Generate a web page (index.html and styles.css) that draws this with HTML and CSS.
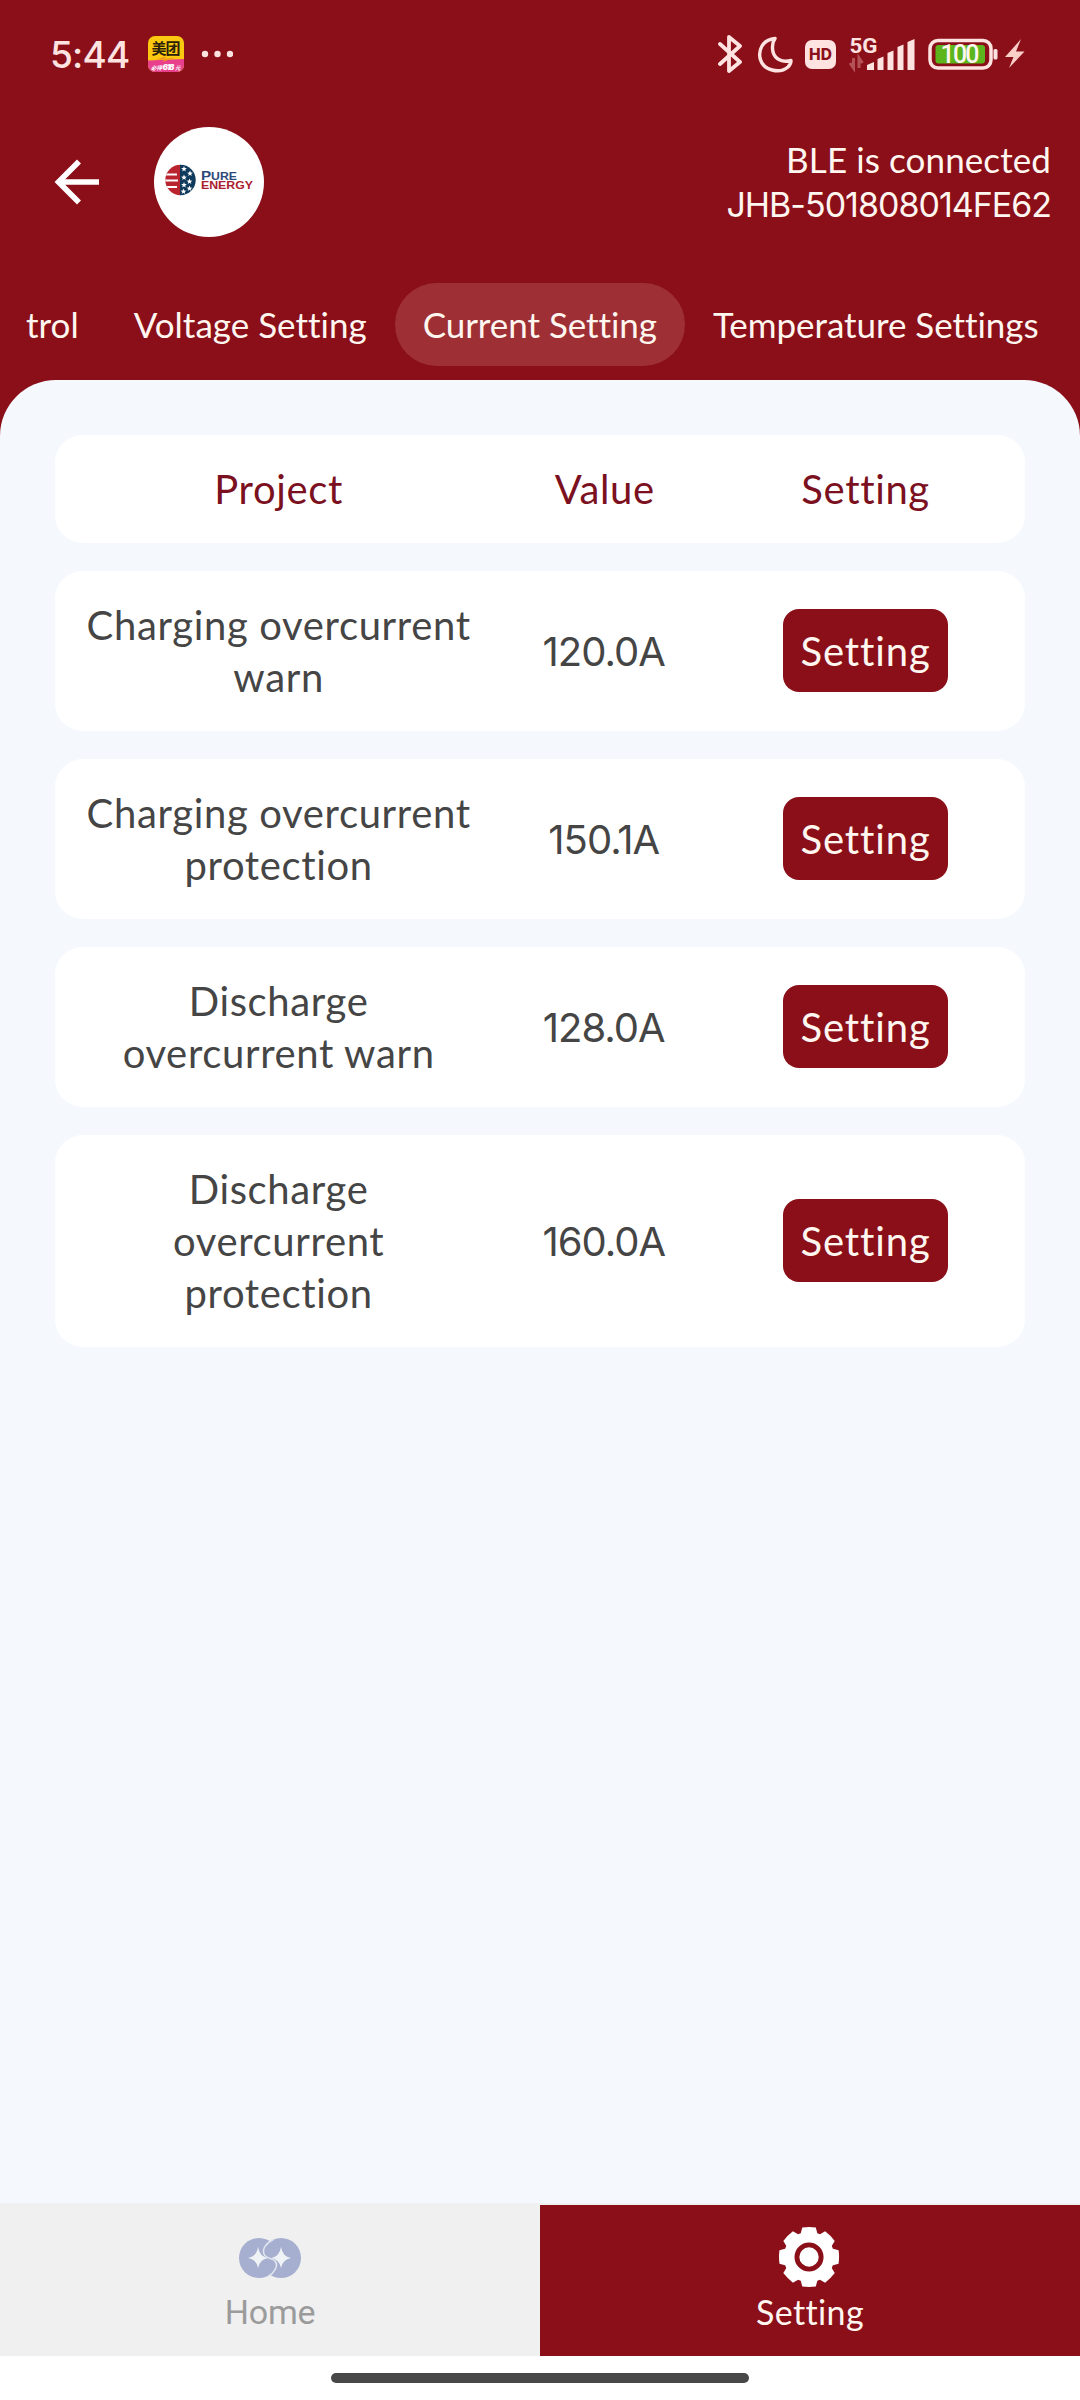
FILE: index.html
```html
<!DOCTYPE html>
<html lang="en">
<head>
<meta charset="utf-8">
<title>Current Setting</title>
<link rel="stylesheet" href="styles.css">
</head>
<body>
<div class="app">
  <div class="status">
    <span class="clock">5:44</span>
    <svg class="promo" width="36" height="36" viewBox="0 0 36 36">
      <clipPath id="tile"><rect width="36" height="36" rx="7"/></clipPath>
      <g clip-path="url(#tile)">
        <rect width="36" height="36" fill="#fdc910"/>
        <path d="M0 24.5 36 23V36H0Z" fill="#e8408c"/>
        <path d="M7 23.5 19 20.5 16 23 28 21.5 14 26 17 23.5Z" fill="#f5911e"/>
        <text class="promo-name" x="3.5" y="17.5" textLength="29">美团</text>
        <text class="promo-sub" x="3" y="34" textLength="11">必得</text>
        <text class="promo-num" x="14.5" y="34" textLength="12">618</text>
        <text class="promo-sub" x="27" y="34">元</text>
      </g>
    </svg>
    <svg class="dots" width="32" height="8" viewBox="0 0 32 8" fill="#ffe3e1"><circle cx="4" cy="4" r="3.2"/><circle cx="16.5" cy="4" r="3.2"/><circle cx="29" cy="4" r="3.2"/></svg>
    <svg class="indicators" width="312" height="40" viewBox="0 0 312 40" fill="none">
      <path d="M4 10 24 28 13 37V3L24 12 4 30" transform="translate(-2 0)" stroke="#ffe3e1" stroke-width="3.8" stroke-linejoin="round" stroke-linecap="round"/>
      <path d="M57 4.5C44 6 40.5 16 42 24 45 37 62 40 70 33 72 31 73 28.5 73 26.5 64 29 57 25 55 18 54 13 54.5 8 57 4.5Z" stroke="#ffe3e1" stroke-width="3.4" stroke-linejoin="round"/>
      <rect x="87" y="6" width="31" height="29" rx="7" fill="#ffe3e1"/>
      <text class="hd" x="91" y="26" textLength="23">HD</text>
      <text class="net" x="131.5" y="19" textLength="28" lengthAdjust="spacingAndGlyphs">5G</text>
      <path d="M132 29 135.5 34V24M144.5 29 141 24V34" stroke="#b35257" stroke-width="3"/>
      <path transform="translate(-1 0)" fill="#ffe3e1" d="M150 31 157 28V36H150ZM160.5 25 166.5 22.5V36H160.5ZM170.5 19 176.5 16.5V36H170.5ZM180.5 13 186.5 10.5V36H180.5ZM190.5 8 197.5 5V36H190.5Z"/>
      <rect x="212" y="6.5" width="61" height="27.5" rx="8" stroke="#ffe3e1" stroke-width="3.5"/>
      <rect x="217.5" y="11" width="49.5" height="18.5" rx="3" fill="#5cb51c"/>
      <rect x="275.5" y="15" width="4" height="10.5" rx="1.5" fill="#ffe3e1"/>
      <text class="level" x="222.5" y="29" textLength="39">100</text>
      <path d="M303 5 287 23H295.5L291 34 306.5 17.5H298Z" fill="#f9cfc8"/>
    </svg>
  </div>

  <header class="header">
    <svg class="back" width="46" height="46" viewBox="0 0 46 46" fill="none" stroke="#fff" stroke-width="5.6"><path d="M25 2.5 4.5 23 25 43.5M4.5 23H45"/></svg>
    <svg class="logo" width="110" height="110" viewBox="0 0 110 110">
      <circle cx="55" cy="55" r="55" fill="#fff"/>
      <clipPath id="ball"><circle cx="26.5" cy="53" r="15.2"/></clipPath>
      <g clip-path="url(#ball)">
        <rect x="11" y="37" width="15" height="32" fill="#b9242f"/>
        <rect x="26" y="37" width="17" height="32" fill="#0f3a5c"/>
        <path d="M11 47.5H23M11 53.5H24M11 60H23" stroke="#fff" stroke-width="1.8"/>
      </g>
      <defs><path id="star" d="M0-2.9.8-.9 2.9-.8 1.2.5 1.8 2.5 0 1.3-1.8 2.5-1.2.5-2.9-.8-.8-.9Z" fill="#fff"/></defs>
      <use href="#star" x="30" y="42"/><use href="#star" x="36" y="46.5"/><use href="#star" x="30" y="50.5"/><use href="#star" x="35.5" y="54.5"/><use href="#star" x="30" y="58"/><use href="#star" x="35.5" y="61.5"/><use href="#star" x="29.5" y="64.5"/>
      <text class="brand pure" x="47" y="52.5" textLength="36" lengthAdjust="spacingAndGlyphs"><tspan class="cap">P</tspan>URE</text>
      <text class="brand energy" x="47" y="62" textLength="52" lengthAdjust="spacingAndGlyphs">ENERGY</text>
    </svg>
    <div class="device">
      <div class="state">BLE is connected</div>
      <div class="serial">JHB-501808014FE62</div>
    </div>
  </header>

  <nav class="tabs">
    <span class="tab">trol</span>
    <span class="tab">Voltage Setting</span>
    <span class="tab active">Current Setting</span>
    <span class="tab">Temperature Settings</span>
  </nav>

  <main class="panel">
    <div class="row head"><span>Project</span><span>Value</span><span>Setting</span></div>
    <div class="row"><span>Charging overcurrent<br>warn</span><span class="value">120.0A</span><button class="set">Setting</button></div>
    <div class="row"><span>Charging overcurrent<br>protection</span><span class="value">150.1A</span><button class="set">Setting</button></div>
    <div class="row"><span>Discharge<br>overcurrent warn</span><span class="value">128.0A</span><button class="set">Setting</button></div>
    <div class="row"><span>Discharge<br>overcurrent<br>protection</span><span class="value">160.0A</span><button class="set">Setting</button></div>
  </main>

  <footer class="bottom">
    <div class="item">
      <svg width="64" height="64" viewBox="0 0 64 64">
        <circle cx="21" cy="33" r="20" fill="#a6afd0"/><circle cx="43" cy="33" r="20" fill="#a6afd0"/>
        <path d="M36 14C28 18 24 24 26 29 28 34 34 33 37 36 41 41 36 48 30 51.5" fill="none" stroke="#e3e7f0" stroke-width="1.5"/>
        <path d="M20 22Q21.5 31.5 30 33 21.5 34.5 20 43 18.5 34.5 10 33 18.5 31.5 20 22ZM43 22Q44.5 31.5 53 33 44.5 34.5 43 43 41.5 34.5 33 33 41.5 31.5 43 22Z" fill="#f0f3f5"/>
      </svg>
      <span class="label home">Home</span>
    </div>
    <div class="item current">
      <svg width="62" height="64" viewBox="0 0 64 64">
        <g fill="#fff"><circle cx="31" cy="32" r="26"/>
          <path id="tooth" d="M21.500 11 24 1.500Q31 .500 38 1.500L40.500 11V53L38 62.500Q31 63.500 24 62.500L21.500 53Z"/><use href="#tooth" transform="rotate(45 31 32)"/><use href="#tooth" transform="rotate(90 31 32)"/><use href="#tooth" transform="rotate(135 31 32)"/>
        </g>
        <circle cx="31" cy="32" r="12.5" fill="none" stroke="#8a0f19" stroke-width="5"/>
      </svg>
      <span class="label">Setting</span>
    </div>
  </footer>
  <div class="gesture"><div class="handle"></div></div>
</div>
</body>
</html>
```
FILE: styles.css
```css
* { box-sizing: border-box; }

body {
  margin: 0;
  background: #8a0f19;
  font-family: Lato, "Noto Sans CJK SC", sans-serif;
  font-variant-ligatures: none;
}

.app {
  width: 1080px;
  height: 2400px;
  display: flex;
  flex-direction: column;
  overflow: hidden;
}

.status {
  height: 108px;
  padding: 0 50px;
  display: flex;
  align-items: center;
  color: #ffe3e1;
}

.clock {
  width: 98px;
  font: 500 37px Inter, sans-serif;
  letter-spacing: -0.8px;
}

.dots { margin-left: 17px; }
.indicators { margin-left: auto; }
.promo-name { font: 700 15px "Noto Sans CJK SC", sans-serif; fill: #2b2108; }
.promo-sub { font: italic 700 5.5px "Noto Sans CJK SC", sans-serif; fill: #fff; }
.promo-num { font: italic 900 8px Inter, sans-serif; fill: #fff; }
.hd { font: 800 15.5px Inter, sans-serif; fill: #8a0f19; }
.net { font: 700 21px Roboto, sans-serif; fill: #ffe3e1; }
.level { font: 500 25px Roboto, sans-serif; fill: #fff6f2; }

.header {
  height: 147px;
  padding: 0 29px 0 54px;
  display: flex;
  align-items: center;
}

.logo { margin-left: 54px; }
.brand { font-family: "Liberation Sans", sans-serif; font-weight: 700; font-size: 10.5px; }
.brand .cap { font-size: 13px; }
.pure { fill: #2c4a78; }
.energy { fill: #ab2030; }

.device {
  margin-left: auto;
  color: #fff6f0;
  text-align: right;
  font-size: 35px;
  line-height: 45px;
}

.state { letter-spacing: 0.1px; }

.serial {
  font: 400 34px/45px Inter, sans-serif;
  letter-spacing: -1px;
}

.tabs {
  height: 83px;
  margin: 28px 0 14px;
  display: flex;
  white-space: nowrap;
}

.tab {
  padding: 0 28px;
  color: #fff6f0;
  font-size: 35px;
  line-height: 83px;
}

.tab:first-child { padding-left: 26px; padding-right: 27px; }
.tab.active { background: #9e3035; border-radius: 42px; }
.tab.active, .tab.active + .tab { letter-spacing: -0.05px; }

.panel {
  flex: 1;
  padding: 55px;
  display: flex;
  flex-direction: column;
  gap: 28px;
  background: #f5f9fe;
  border-radius: 56px 56px 0 0;
}

.row {
  padding: 28px 29px 28px 28px;
  display: grid;
  grid-template-columns: 3fr 2fr 2fr;
  align-items: center;
  background: #fff;
  border-radius: 28px;
  color: #454545;
  font-size: 40px;
  line-height: 52px;
  letter-spacing: 0.65px;
  text-align: center;
}

.head { color: #7b1020; }

.value {
  font-family: Inter, sans-serif;
  letter-spacing: -1px;
  padding: 1px 2px 0 0;
}

.set {
  justify-self: center;
  width: 165px;
  height: 83px;
  margin-top: -1px;
  padding: 0;
  border: 0;
  border-radius: 16px;
  background: #8a0f19;
  color: #fff6f0;
  font: inherit;
  letter-spacing: 0.9px;
}

.bottom {
  height: 153px;
  display: grid;
  grid-template-columns: 1fr 1fr;
  align-items: end;
  background: #f0f0f0;
}

.item {
  height: 151px;
  padding-top: 20px;
  display: flex;
  flex-direction: column;
  align-items: center;
  color: #fff6f0;
}

.item.current { background: #8a0f19; }
.label { font-size: 34px; line-height: 46px; letter-spacing: 0.4px; }
.home { color: #9b9b9b; font-family: Roboto, sans-serif; letter-spacing: -0.3px; }

.gesture {
  height: 44px;
  display: flex;
  justify-content: center;
  align-items: center;
  background: #fff;
}

.handle {
  width: 418px;
  height: 10px;
  border-radius: 5px;
  background: #484848;
}
```
